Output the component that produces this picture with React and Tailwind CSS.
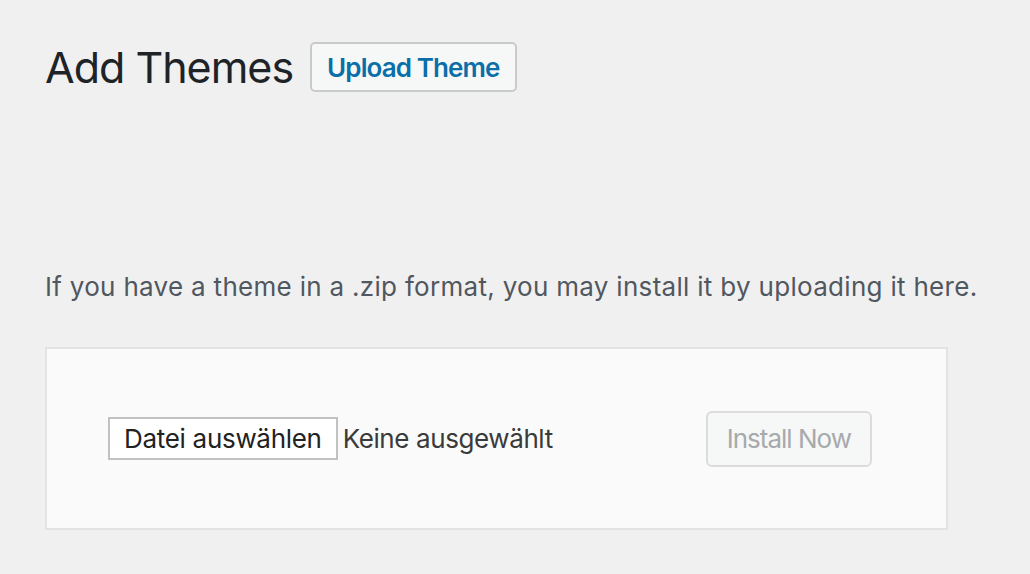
export default function App() {
  return (
    <div className="min-h-[574px] w-full bg-[#f0f0f1] pl-[45px] pt-[40px]" style={{ fontFamily: 'Inter, "Liberation Sans", sans-serif' }}>
      <div className="flex items-center">
        <h1 className="text-[43px] leading-[54px] text-[#1d2327] font-normal tracking-[-1px]">Add Themes</h1>
        <button className="ml-[17px] h-[50px] px-[15px] rounded-[5px] border-2 border-[#c9cacc] bg-[#f6f7f7] text-[#0a6fa8] text-[26px] font-semibold tracking-[-0.9px]">Upload Theme</button>
      </div>
      <p className="mt-[175px] text-[26px] leading-[36px] text-[#50575e] tracking-[0.3px]">If you have a theme in a .zip format, you may install it by uploading it here.</p>
      <div className="mt-[42px] w-[903px] h-[183px] border-2 border-[#e3e3e4] bg-[#fafafa] flex items-center pl-[61px]">
        <div className="flex items-center">
          <span className="h-[43px] px-[14px] flex items-center border-2 border-[#c1c1c1] bg-white text-[26px] text-[#222] tracking-[-0.3px]">Datei auswählen</span>
          <span className="ml-[5px] text-[26px] text-[#3a3a3a] tracking-[-0.4px]">Keine ausgewählt</span>
        </div>
        <button className="ml-[153px] h-[56px] px-[19px] rounded-[6px] border-2 border-[#dcdcde] bg-[#f6f7f7] text-[#a7aaad] text-[26px] tracking-[-1px]">Install Now</button>
      </div>
    </div>
  );
}
